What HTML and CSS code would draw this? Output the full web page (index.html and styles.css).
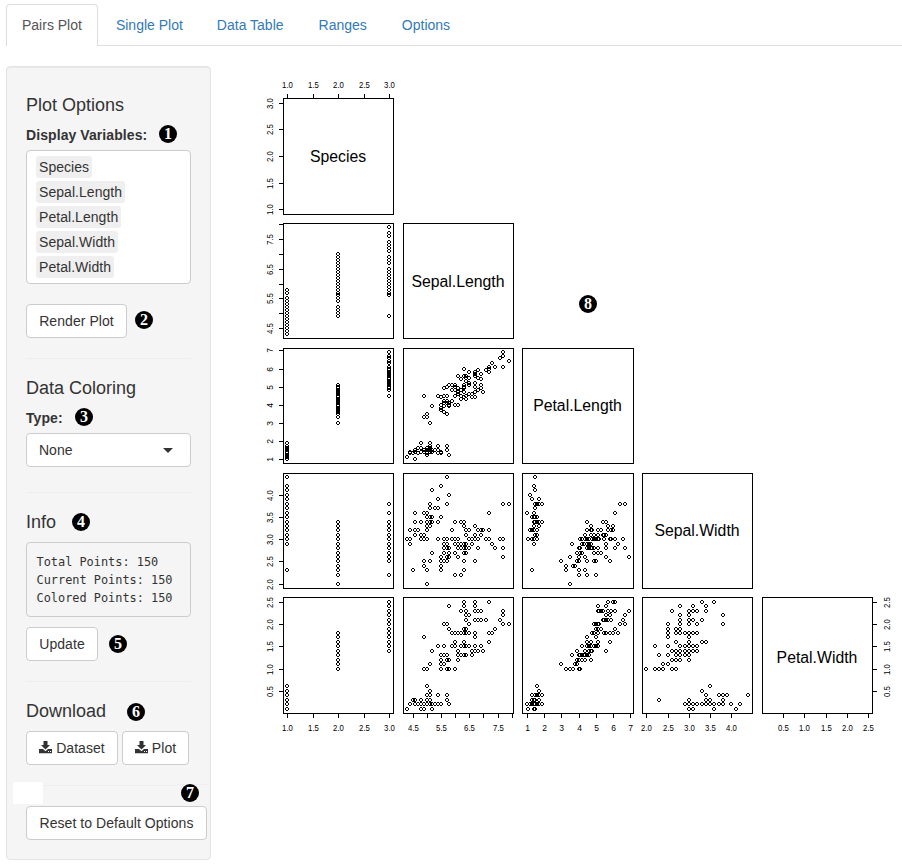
FILE: index.html
```html
<!DOCTYPE html>
<html lang="en">
<head>
<meta charset="utf-8">
<title>Pairs Plot</title>
<link rel="stylesheet" href="styles.css">
</head>
<body>
<nav class="tabs">
  <a class="tab active">Pairs Plot</a>
  <a class="tab">Single Plot</a>
  <a class="tab wide">Data Table</a>
  <a class="tab wide">Ranges</a>
  <a class="tab">Options</a>
</nav>
<main class="layout">
  <aside class="well">
    <h4>Plot Options</h4>
    <label>Display Variables:<span class="badge b1">1</span></label>
    <div class="multi">
      <span>Species</span>
      <span>Sepal.Length</span>
      <span>Petal.Length</span>
      <span>Sepal.Width</span>
      <span>Petal.Width</span>
    </div>
    <div class="row"><button class="btn render">Render Plot</button><span class="badge b2">2</span></div>
    <hr class="hr1">
    <h4>Data Coloring</h4>
    <label>Type:<span class="badge b3">3</span></label>
    <div class="select">None<i class="caret"></i></div>
    <hr class="hr2">
    <h4>Info<span class="badge b4">4</span></h4>
    <pre>Total Points: 150
Current Points: 150
Colored Points: 150</pre>
    <div class="row"><button class="btn update">Update</button><span class="badge b5">5</span></div>
    <hr class="hr3">
    <h4>Download<span class="badge b6">6</span></h4>
    <div class="row downloads">
      <button class="btn dataset"><svg class="dl" viewBox="0 0 13 13"><path d="M4.500 0h4v4H11L6.500 8.500 2 4h2.500z"/><path d="M0 8h4l2.500 2.300L9 8h4v4.300H0z"/><path class="dot" d="M9 10h1v1H9zM11 10h1v1h-1z"/></svg>Dataset</button>
      <button class="btn image"><svg class="dl" viewBox="0 0 13 13"><path d="M4.500 0h4v4H11L6.500 8.500 2 4h2.500z"/><path d="M0 8h4l2.500 2.300L9 8h4v4.300H0z"/><path class="dot" d="M9 10h1v1H9zM11 10h1v1h-1z"/></svg>Plot</button>
    </div>
    <div class="divider"><i class="patch"></i><i class="end"></i><span class="badge b7">7</span></div>
    <button class="btn reset">Reset to Default Options</button>
  </aside>
  <section class="plot">
    <svg id="pairs" width="692" height="700" viewBox="210 60 692 700"></svg>
    <span class="badge b8">8</span>
  </section>
</main>
<script src="plot.js"></script>
</body>
</html>
```
FILE: styles.css
```css
* { box-sizing: border-box; }
body { margin: 0; background: #fff; color: #333; font: 14px/20px "Liberation Sans", Arial, sans-serif; height: 866px; overflow: hidden; }
.tabs { display: flex; gap: 2px; margin-left: 6px; padding-top: 4px; height: 46px; border-bottom: 1px solid #ddd; }
.tab { height: 42px; padding: 11px 16px 10px; color: #337ab7; }
.tab.wide { padding-right: 17px; }
.tab.active { color: #555; background: #fff; border: 1px solid #ddd; border-bottom: 0; border-radius: 4px 4px 0 0; padding: 10px 15px; }
.layout { display: flex; padding: 20px 0 0 6px; }
.well { width: 205px; height: 794px; flex: none; padding: 19px; background: #f5f5f5; border: 1px solid #e3e3e3; border-radius: 4px; box-shadow: inset 0 1px 1px rgba(0,0,0,.05); }
h4 { position: relative; margin: 9px 0 10px; font-size: 18px; font-weight: 400; line-height: 20px; }
label { position: relative; display: block; font-weight: 700; margin-bottom: 5px; letter-spacing: .08px; }
.multi { display: flex; flex-direction: column; align-items: flex-start; gap: 3px; width: 165px; height: 134px; padding: 5px 9px; background: #fff; border: 1px solid #ccc; border-radius: 4px; }
.multi span { height: 22px; padding: 1px 3px; background: #efefef; border-radius: 3px; letter-spacing: .05px; }
.row { position: relative; display: flex; }
.multi + .row { margin-top: 20px; }
.btn { height: 34px; padding: 0; background: #fff; color: #333; border: 1px solid #ccc; border-radius: 4px; font: inherit; letter-spacing: .06px; text-align: center; white-space: nowrap; }
.render { width: 101px; }
.update { width: 72px; }
.dataset { width: 92px; }
.image { width: 67px; }
.reset { width: 181px; }
hr { height: 1px; margin: 20px 0; border: 0; background: #eee; }
.hr1 { margin-bottom: 19px; }
.select { display: flex; align-items: center; justify-content: space-between; width: 165px; height: 34px; padding: 0 17px 0 12px; background: #fff; border: 1px solid #ccc; border-radius: 4px; }
.caret { border: 5px solid transparent; border-top-color: #333; border-bottom: 0; }
.hr2 { margin-top: 25px; margin-bottom: 19px; }
.hr3 { margin-bottom: 19px; }
pre { width: 165px; height: 75px; margin: 0 0 10px; padding: 10px 9.500px; font: 11.900px/18px "DejaVu Sans Mono", monospace; border: 1px solid #ccc; border-radius: 4px; background: #f5f5f5; }
.downloads { gap: 4px; }
.dl { width: 13px; height: 13px; margin-right: 4px; vertical-align: -1px; fill: #333; }
.dl .dot { fill: #fff; }
.divider { position: relative; width: 151px; height: 1px; margin: 20px 0; background: #eee; }
.patch { position: absolute; left: -13px; top: -3px; width: 30px; height: 22px; background: #fff; }
.end { position: absolute; left: 151px; top: -1px; width: 30px; height: 1px; background: #eee; }
.badge { position: absolute; width: 18px; height: 18px; border-radius: 50%; background: #000; color: #fff; font: 700 16px/18px "Liberation Serif", serif; letter-spacing: 0; text-align: center; }
.b1 { left: 133px; top: 0; }
.b2 { left: 109px; top: 7px; }
.b3 { left: 49px; top: 0; }
.b4 { left: 46px; top: 1px; }
.b5 { left: 83px; top: 8px; }
.b6 { left: 101px; top: 2px; }
.b7 { left: 155px; top: -1px; }
.b8 { left: 369px; top: 235px; }
.plot { position: relative; margin-left: -1px; margin-top: -6px; }
.plot svg { display: block; }
.frame, .ticks { fill: none; stroke: #000; stroke-width: 1; shape-rendering: crispEdges; }
.points { fill: #000; shape-rendering: crispEdges; }
.axis { font: 8.500px "Liberation Sans", Arial, sans-serif; text-anchor: middle; fill: #000; }
.name { font: 15.800px "Liberation Sans", Arial, sans-serif; text-anchor: middle; fill: #000; }
```
FILE: plot.js
```js
// Iris measurements in tenths: sepal length, sepal width, petal length, petal width.
const species = [
  "51351402 49301402 47321302 46311502 50361402 54391704 46341403 50341502 44291402 49311501 54371502 48341602 48301401 43301101 58401202 57441504 54391304 51351403 57381703 51381503 54341702 51371504 46361002 51331705 48341902 50301602 50341604 52351502 52341402 47321602 48311602 54341504 52411501 55421402 49311502 50321202 55351302 49361401 44301302 51341502 50351303 45231303 44321302 50351606 51381904 48301403 51381602 46321402 53371502 50331402",
  "70324714 64324515 69314915 55234013 65284615 57284513 63334716 49243310 66294613 52273914 50203510 59304215 60224010 61294714 56293613 67314414 56304515 58274110 62224515 56253911 59324818 61284013 63254915 61284712 64294313 66304414 68284814 67305017 60294515 57263510 55243811 55243710 58273912 60275116 54304515 60344516 67314715 63234413 56304113 55254013 55264412 61304614 58264012 50233310 56274213 57304212 57294213 62294313 51253011 57284113",
  "63336025 58275119 71305921 63295618 65305822 76306621 49254517 73296318 67255818 72366125 65325120 64275319 68305521 57255020 58285124 64325323 65305518 77386722 77266923 60225015 69325723 56284920 77286720 63274918 67335721 72326018 62284818 61304918 64285621 72305816 74286119 79386420 64285622 63285115 61265614 77306123 63345624 64315518 60304818 69315421 67315624 69315123 58275119 68325923 67335725 67305223 63255019 65305220 62345423 59305118"
];
const rows = species.flatMap((group, i) => group.split(" ").map(s => {
  const n = s.match(/../g).map(v => v / 10);
  return [i + 1, n[0], n[2], n[1], n[3]];
}));
const range = (a, b, step) => Array.from({ length: Math.round((b - a) / step) + 1 }, (_, i) => a + i * step);
const vars = [
  { name: "Species", lo: 1, hi: 3, ticks: range(1, 3, .5), baseline: 162 },
  { name: "Sepal.Length", lo: 4.3, hi: 7.9, ticks: range(4.5, 8, .5), skip: true, baseline: 287 },
  { name: "Petal.Length", lo: 1, hi: 6.9, ticks: range(1, 7, 1), whole: true, baseline: 411 },
  { name: "Sepal.Width", lo: 2, hi: 4.4, ticks: range(2, 4, .5), baseline: 536 },
  { name: "Petal.Width", lo: .1, hi: 2.5, ticks: range(.5, 2.5, .5), baseline: 663 }
];
// Panel frames, snapped to whole pixels.
const left = [283, 403, 522, 642, 762], right = [393, 513, 633, 752, 872];
const upper = [98, 223, 348, 473, 597], lower = [214, 338, 463, 588, 713];
// Unsnapped data areas inside those frames.
const x0 = [283.2, 402.9, 522.6, 642.3, 762], panelW = 110.1;
const y0 = [213.6, 338.23, 463.1, 587.95, 712.8], panelH = 115.1;
const frac = (v, x) => (x - v.lo + (v.hi - v.lo) * .04) / ((v.hi - v.lo) * 1.08);
const px = (i, x) => x0[i] + frac(vars[i], x) * panelW;
const py = (i, y) => y0[i] - frac(vars[i], y) * panelH;
const label = (v, t) => v.whole ? String(t) : t.toFixed(1);
const fit = v => v.whole ? "" : ' textLength="10.8" lengthAdjust="spacingAndGlyphs"';
let out = "";

function xAxis(i, y, dir, textY) {
  vars[i].ticks.forEach((t, k) => {
    const x = Math.round(px(i, t));
    out += `<path class="ticks" d="M${x + .5} ${y + .5}v${dir * 4.5}"/>`;
    if (!(vars[i].skip && k % 2)) out += `<text class="axis" x="${x + .5}" y="${textY}"${fit(vars[i])}>${label(vars[i], t)}</text>`;
  });
}
function yAxis(i, x, dir, textX) {
  vars[i].ticks.forEach((t, k) => {
    const y = Math.round(py(i, t));
    out += `<path class="ticks" d="M${x + .5} ${y + .5}h${dir * 4.5}"/>`;
    if (!(vars[i].skip && k % 2)) out += `<text class="axis" transform="translate(${textX} ${y + .5}) rotate(-90)"${fit(vars[i])}>${label(vars[i], t)}</text>`;
  });
}
for (let r = 0; r < 5; r++) {
  for (let c = 0; c <= r; c++) {
    out += `<rect class="frame" x="${left[c] + .5}" y="${upper[r] + .5}" width="${right[c] - left[c]}" height="${lower[r] - upper[r]}"/>`;
    if (r === c) {
      out += `<text class="name" x="${(left[c] + right[c]) / 2}" y="${vars[r].baseline}">${vars[r].name}</text>`;
    } else {
      const d = rows.map(p => {
        const x = Math.round(px(c, p[c])) - 2, y = Math.round(py(r, p[r])) - 2;
        return `M${x + 1} ${y}h2v1h-2zM${x + 1} ${y + 3}h2v1h-2zM${x} ${y + 1}h1v2h-1zM${x + 3} ${y + 1}h1v2h-1z`;
      }).join("");
      out += `<path class="points" d="${d}"/>`;
    }
  }
  yAxis(r, 283, -1, 273);
  xAxis(r, 713, 1, 731);
}
xAxis(0, 98, -1, 88);
yAxis(4, 872, 1, 890);
document.getElementById("pairs").innerHTML = out;
```
